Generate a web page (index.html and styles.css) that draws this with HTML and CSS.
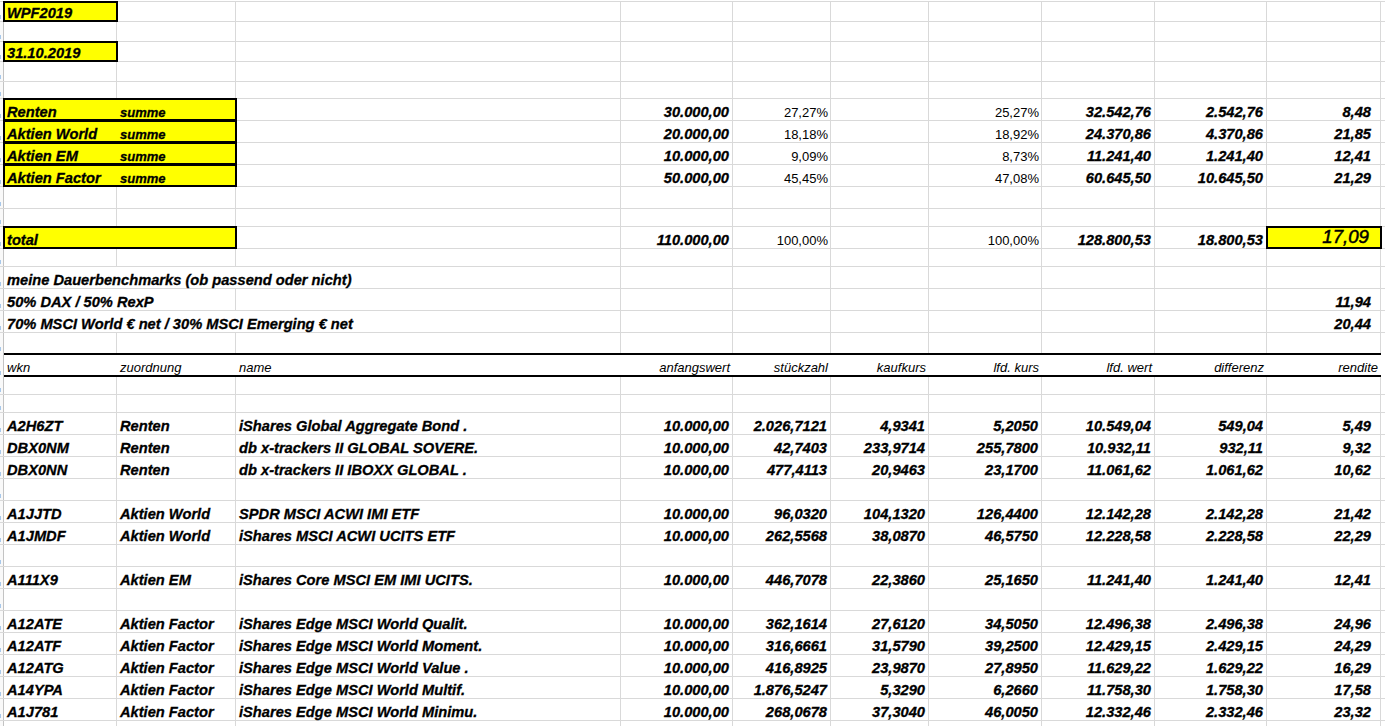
FILE: index.html
```html
<!DOCTYPE html>
<html lang="de">
<head>
<meta charset="utf-8">
<title>WPF2019</title>
<link rel="stylesheet" href="styles.css">
</head>
<body>
<div class="sheet">
  <div class="row h20"><div class="rh"></div><div class="box">WPF2019</div><div></div><div></div><div></div><div></div><div></div><div></div><div></div><div></div><div></div><div></div></div>
  <div class="row h20"><div class="rh"></div><div></div><div></div><div></div><div></div><div></div><div></div><div></div><div></div><div></div><div></div><div></div></div>
  <div class="row h20"><div class="rh"></div><div class="box">31.10.2019</div><div></div><div></div><div></div><div></div><div></div><div></div><div></div><div></div><div></div><div></div></div>
  <div class="row h20"><div class="rh"></div><div></div><div></div><div></div><div></div><div></div><div></div><div></div><div></div><div></div><div></div><div></div></div>
  <div class="row h17"><div class="rh"></div><div></div><div></div><div></div><div></div><div></div><div></div><div></div><div></div><div></div><div></div><div></div></div>

  <div class="row"><div class="rh"></div><div class="box s2 pair"><span class="bl">Renten</span><span class="sm">summe</span></div><div></div><div class="n">30.000,00</div><div class="pc">27,27%</div><div></div><div class="pc">25,27%</div><div class="n">32.542,76</div><div class="n">2.542,76</div><div class="n j">8,48</div><div></div></div>
  <div class="row"><div class="rh"></div><div class="box s2 pair"><span class="bl">Aktien World</span><span class="sm">summe</span></div><div></div><div class="n">20.000,00</div><div class="pc">18,18%</div><div></div><div class="pc">18,92%</div><div class="n">24.370,86</div><div class="n">4.370,86</div><div class="n j">21,85</div><div></div></div>
  <div class="row"><div class="rh"></div><div class="box s2 pair"><span class="bl">Aktien EM</span><span class="sm">summe</span></div><div></div><div class="n">10.000,00</div><div class="pc">9,09%</div><div></div><div class="pc">8,73%</div><div class="n">11.241,40</div><div class="n">1.241,40</div><div class="n j">12,41</div><div></div></div>
  <div class="row"><div class="rh"></div><div class="box s2 pair"><span class="bl">Aktien Factor</span><span class="sm">summe</span></div><div></div><div class="n">50.000,00</div><div class="pc">45,45%</div><div></div><div class="pc">47,08%</div><div class="n">60.645,50</div><div class="n">10.645,50</div><div class="n j">21,29</div><div></div></div>
  <div class="row"><div class="rh"></div><div></div><div></div><div></div><div></div><div></div><div></div><div></div><div></div><div></div><div></div><div></div></div>
  <div class="row h18"><div class="rh"></div><div></div><div></div><div></div><div></div><div></div><div></div><div></div><div></div><div></div><div></div><div></div></div>
  <div class="row"><div class="rh"></div><div class="box s2 pair"><span class="bl">total</span></div><div></div><div class="n">110.000,00</div><div class="pc">100,00%</div><div></div><div class="pc">100,00%</div><div class="n">128.800,53</div><div class="n">18.800,53</div><div class="box n big">17,09</div><div></div></div>
  <div class="row h18"><div class="rh"></div><div></div><div></div><div></div><div></div><div></div><div></div><div></div><div></div><div></div><div></div><div></div></div>

  <div class="row"><div class="rh"></div><div class="s3">meine Dauerbenchmarks (ob passend oder nicht)</div><div></div><div></div><div></div><div></div><div></div><div></div><div></div><div></div></div>
  <div class="row"><div class="rh"></div><div class="s2">50% DAX / 50% RexP</div><div></div><div></div><div></div><div></div><div></div><div></div><div></div><div class="n j">11,94</div><div></div></div>
  <div class="row"><div class="rh"></div><div class="s3">70% MSCI World € net / 30% MSCI Emerging € net</div><div></div><div></div><div></div><div></div><div></div><div></div><div class="n j">20,44</div><div></div></div>
  <div class="row h20 nob"><div class="rh"></div><div></div><div></div><div></div><div></div><div></div><div></div><div></div><div></div><div></div><div></div><div></div></div>

  <div class="row head nob"><div class="rh"></div><div class="hd">wkn</div><div class="hd">zuordnung</div><div class="hd">name</div><div class="hd r">anfangswert</div><div class="hd r">stückzahl</div><div class="hd r">kaufkurs</div><div class="hd r">lfd. kurs</div><div class="hd r">lfd. wert</div><div class="hd r">differenz</div><div class="hd r">rendite</div><div></div></div>

  <div class="row h18"><div class="rh"></div><div></div><div></div><div></div><div></div><div></div><div></div><div></div><div></div><div></div><div></div><div></div></div>
  <div class="row h18"><div class="rh"></div><div></div><div></div><div></div><div></div><div></div><div></div><div></div><div></div><div></div><div></div><div></div></div>

  <div class="row"><div class="rh"></div><div>A2H6ZT</div><div>Renten</div><div>iShares Global Aggregate Bond .</div><div class="n">10.000,00</div><div class="n">2.026,7121</div><div class="n">4,9341</div><div class="n">5,2050</div><div class="n">10.549,04</div><div class="n">549,04</div><div class="n j">5,49</div><div></div></div>
  <div class="row"><div class="rh"></div><div>DBX0NM</div><div>Renten</div><div>db x-trackers II GLOBAL SOVERE.</div><div class="n">10.000,00</div><div class="n">42,7403</div><div class="n">233,9714</div><div class="n">255,7800</div><div class="n">10.932,11</div><div class="n">932,11</div><div class="n j">9,32</div><div></div></div>
  <div class="row"><div class="rh"></div><div>DBX0NN</div><div>Renten</div><div>db x-trackers II IBOXX GLOBAL .</div><div class="n">10.000,00</div><div class="n">477,4113</div><div class="n">20,9463</div><div class="n">23,1700</div><div class="n">11.061,62</div><div class="n">1.061,62</div><div class="n j">10,62</div><div></div></div>
  <div class="row"><div class="rh"></div><div></div><div></div><div></div><div></div><div></div><div></div><div></div><div></div><div></div><div></div><div></div></div>
  <div class="row"><div class="rh"></div><div>A1JJTD</div><div>Aktien World</div><div>SPDR MSCI ACWI IMI ETF</div><div class="n">10.000,00</div><div class="n">96,0320</div><div class="n">104,1320</div><div class="n">126,4400</div><div class="n">12.142,28</div><div class="n">2.142,28</div><div class="n j">21,42</div><div></div></div>
  <div class="row"><div class="rh"></div><div>A1JMDF</div><div>Aktien World</div><div>iShares MSCI ACWI UCITS ETF</div><div class="n">10.000,00</div><div class="n">262,5568</div><div class="n">38,0870</div><div class="n">46,5750</div><div class="n">12.228,58</div><div class="n">2.228,58</div><div class="n j">22,29</div><div></div></div>
  <div class="row"><div class="rh"></div><div></div><div></div><div></div><div></div><div></div><div></div><div></div><div></div><div></div><div></div><div></div></div>
  <div class="row"><div class="rh"></div><div>A111X9</div><div>Aktien EM</div><div>iShares Core MSCI EM IMI UCITS.</div><div class="n">10.000,00</div><div class="n">446,7078</div><div class="n">22,3860</div><div class="n">25,1650</div><div class="n">11.241,40</div><div class="n">1.241,40</div><div class="n j">12,41</div><div></div></div>
  <div class="row"><div class="rh"></div><div></div><div></div><div></div><div></div><div></div><div></div><div></div><div></div><div></div><div></div><div></div></div>
  <div class="row"><div class="rh"></div><div>A12ATE</div><div>Aktien Factor</div><div>iShares Edge MSCI World Qualit.</div><div class="n">10.000,00</div><div class="n">362,1614</div><div class="n">27,6120</div><div class="n">34,5050</div><div class="n">12.496,38</div><div class="n">2.496,38</div><div class="n j">24,96</div><div></div></div>
  <div class="row"><div class="rh"></div><div>A12ATF</div><div>Aktien Factor</div><div>iShares Edge MSCI World Moment.</div><div class="n">10.000,00</div><div class="n">316,6661</div><div class="n">31,5790</div><div class="n">39,2500</div><div class="n">12.429,15</div><div class="n">2.429,15</div><div class="n j">24,29</div><div></div></div>
  <div class="row"><div class="rh"></div><div>A12ATG</div><div>Aktien Factor</div><div>iShares Edge MSCI World Value .</div><div class="n">10.000,00</div><div class="n">416,8925</div><div class="n">23,9870</div><div class="n">27,8950</div><div class="n">11.629,22</div><div class="n">1.629,22</div><div class="n j">16,29</div><div></div></div>
  <div class="row"><div class="rh"></div><div>A14YPA</div><div>Aktien Factor</div><div>iShares Edge MSCI World Multif.</div><div class="n">10.000,00</div><div class="n">1.876,5247</div><div class="n">5,3290</div><div class="n">6,2660</div><div class="n">11.758,30</div><div class="n">1.758,30</div><div class="n j">17,58</div><div></div></div>
  <div class="row"><div class="rh"></div><div>A1J781</div><div>Aktien Factor</div><div>iShares Edge MSCI World Minimu.</div><div class="n">10.000,00</div><div class="n">268,0678</div><div class="n">37,3040</div><div class="n">46,0050</div><div class="n">12.332,46</div><div class="n">2.332,46</div><div class="n j">23,32</div><div></div></div>
  <div class="row"><div class="rh"></div><div></div><div></div><div></div><div></div><div></div><div></div><div></div><div></div><div></div><div></div><div></div></div>
</div>
</body>
</html>
```
FILE: styles.css
```css
html, body {
  margin: 0;
  padding: 0;
  background: #ffffff;
  overflow: hidden;
}

body {
  font-family: "Liberation Sans", Arial, sans-serif;
  color: #000000;
}

.sheet {
  width: 1420px;
  margin-top: 1px;
  border-top: 1px solid #d9d9d9;
}

.row {
  display: grid;
  grid-template-columns: 4px 113px 119px 385px 112px 98px 98px 113px 113px 112px 114px 1fr;
  height: 22px;
  box-sizing: border-box;
  border-bottom: 1px solid #d9d9d9;
}

.row.h20 { height: 20px; }
.row.h18 { height: 18px; }
.row.h17 { height: 17px; }
.row.nob { border-bottom: 0; }
.row.head { height: 24px; }

.row > div {
  box-sizing: border-box;
  min-width: 0;
  display: flex;
  align-items: flex-end;
  padding: 0 3px;
  border-right: 1px solid #d9d9d9;
  white-space: nowrap;
  font-size: 14.67px;
  line-height: 16px;
  font-weight: bold;
  font-style: italic;
  -webkit-text-stroke: 0.3px #000000;
}

.row > .rh {
  padding: 0;
  border-right: 1px solid #c3c3c3;
  background:
    linear-gradient(#a8c8ea, #a8c8ea) left bottom 2px / 1px 4px no-repeat,
    #f9f9f9;
}

.s2 { grid-column: span 2; }
.s3 { grid-column: span 3; }

.row > .n { justify-content: flex-end; }
.row > .n.j { padding-right: 9px; }

.row > .pc {
  justify-content: flex-end;
  padding-right: 2px;
  font-size: 13px;
  line-height: 15px;
  font-weight: normal;
  font-style: normal;
  -webkit-text-stroke: 0;
}

.row > .box {
  position: relative;
  z-index: 1;
  background: #ffff00;
  outline: 2px solid #000000;
  outline-offset: -1px;
}

.row > .pair { padding: 0; }

.bl {
  box-sizing: border-box;
  flex: 0 0 113px;
  padding-left: 3px;
}

.sm {
  padding-left: 3px;
  font-size: 13px;
  line-height: 15px;
}

.row > .big {
  font-size: 18.67px;
  line-height: 19px;
  font-weight: normal;
  padding-right: 11px;
  padding-bottom: 2px;
  -webkit-text-stroke: 0.5px #000000;
}

.row.head > div:not(.rh):not(:last-child) {
  border-right: 0;
  border-top: 2px solid #000000;
  border-bottom: 2px solid #000000;
}

.row > .hd {
  font-size: 13px;
  line-height: 15px;
  font-weight: normal;
  -webkit-text-stroke: 0;
}

.row > .hd.r { justify-content: flex-end; }
```
